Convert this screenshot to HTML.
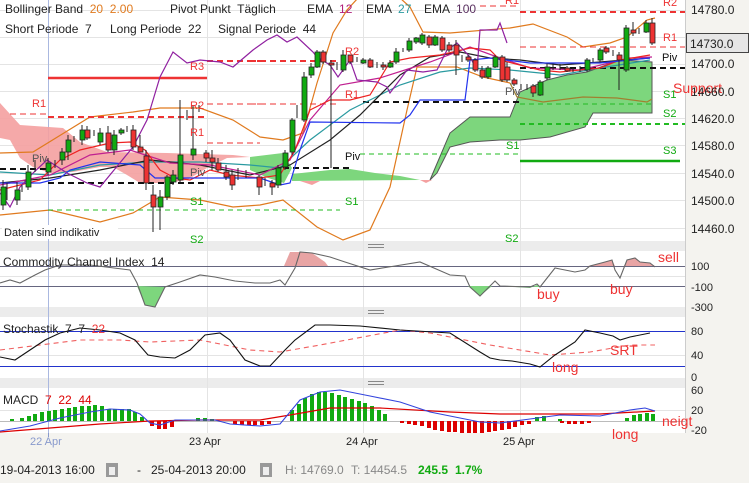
<!DOCTYPE html>
<html><head><meta charset="utf-8"><style>
html,body{margin:0;padding:0;background:#f4f3ef;}
svg{display:block;font-family:"Liberation Sans",Arial,sans-serif;}
text{white-space:pre;}
</style></head><body>
<svg width="749" height="483" viewBox="0 0 749 483" xmlns="http://www.w3.org/2000/svg" xml:space="preserve">
<rect width="749" height="483" fill="#f4f3ef"/>
<rect x="0" y="0" width="686" height="241" fill="#fff"/>
<rect x="0" y="241" width="686" height="10" fill="#ececec"/>
<rect x="0" y="251" width="686" height="56" fill="#fff"/>
<rect x="0" y="307" width="686" height="10" fill="#ececec"/>
<rect x="0" y="317" width="686" height="61" fill="#fff"/>
<rect x="0" y="378" width="686" height="10" fill="#ececec"/>
<rect x="0" y="388" width="686" height="45" fill="#fff"/>
<line x1="685.5" y1="0" x2="685.5" y2="433" stroke="#ccc"/>
<g stroke="#888" stroke-width="1">
<line x1="368" y1="244.5" x2="384" y2="244.5"/><line x1="368" y1="247.5" x2="384" y2="247.5"/>
<line x1="368" y1="310.5" x2="384" y2="310.5"/><line x1="368" y1="313.5" x2="384" y2="313.5"/>
<line x1="368" y1="381.5" x2="384" y2="381.5"/><line x1="368" y1="384.5" x2="384" y2="384.5"/>
</g>
<g stroke="#e4e4e4" stroke-width="1">
<line x1="0" y1="10.5" x2="685" y2="10.5"/><line x1="0" y1="37.5" x2="685" y2="37.5"/>
<line x1="0" y1="64.5" x2="685" y2="64.5"/><line x1="0" y1="91.5" x2="685" y2="91.5"/>
<line x1="0" y1="118.5" x2="685" y2="118.5"/><line x1="0" y1="145.5" x2="685" y2="145.5"/>
<line x1="0" y1="173.5" x2="685" y2="173.5"/><line x1="0" y1="200.5" x2="685" y2="200.5"/>
<line x1="0" y1="228.5" x2="685" y2="228.5"/>
<line x1="207.5" y1="0" x2="207.5" y2="433"/><line x1="363.5" y1="0" x2="363.5" y2="433"/>
<line x1="520.5" y1="0" x2="520.5" y2="433"/>
<line x1="0" y1="276.5" x2="685" y2="276.5"/><line x1="0" y1="355.5" x2="685" y2="355.5"/>
<line x1="0" y1="410.5" x2="685" y2="410.5"/>
</g>
<line x1="48.5" y1="0" x2="48.5" y2="433" stroke="#aab8e0"/>
<polygon fill="#f4a0a0" opacity="0.9" points="0,103 20,125 63,128 80,142 107,152 167,153 233,155 250,157 227,158 207,168 187,180 167,183 140,183 127,175 113,167 100,167 73,172 50,173 33,167 20,158 10,140 0,138"/>
<polygon fill="#7dd67d" points="250,157 283,153 292,168 284,183 268,178 250,170"/>
<polygon fill="#7dd67d" points="292,174 330,170 350,169 375,173 400,176 420,180 292,181"/>
<polygon fill="#f4a0a0" points="300,181 320,181 312,185"/><polygon fill="#f4a0a0" points="420,180 432,180 426,183"/>
<polygon fill="#7dd67d" stroke="#555" stroke-width="1" points="430,180 450,133 470,117 510,117 520,92 547,80 567,75 587,72 620,60 652,62 652,113 593,113 585,127 550,137 520,140 500,140 470,142 450,147 437,173"/>
<g fill="none" stroke="#e07a1e" stroke-width="1.2">
<polyline points="0,153 33,152 90,117 133,112 160,108 200,108 233,120 260,137 283,140 303,133 317,83 333,33 347,10 358,-2"/>
<polyline points="400,-2 410,7 423,32 450,33 510,28 533,24 567,37 583,47 610,43 627,37 647,20 655,18"/>
<polyline points="0,215 50,210 100,222 133,213 160,197 200,200 233,207 260,205 283,200 317,227 343,240 370,230 390,187 407,110 417,67 457,67 483,77 510,83"/>
</g>
<polyline fill="none" stroke="#a08030" stroke-width="1.2" points="510,83 517,97 543,102 583,97 617,98 647,102 652,99"/>
<g fill="none" stroke="#e33" >
<line x1="48" y1="78" x2="207" y2="78" stroke-width="2.5"/>
<line x1="207" y1="61" x2="260" y2="61" stroke-width="2" stroke-dasharray="6,4"/>
<line x1="250" y1="61" x2="340" y2="61" stroke-width="2" stroke-dasharray="6,4"/>
<line x1="207" y1="104" x2="260" y2="104" stroke-dasharray="6,4"/>
<line x1="10" y1="114" x2="48" y2="114" stroke-dasharray="6,4"/>
<line x1="48" y1="117" x2="207" y2="117" stroke-width="2" stroke-dasharray="6,4"/>
<line x1="207" y1="143" x2="260" y2="143" stroke-dasharray="6,4"/>
<line x1="250" y1="104" x2="340" y2="104" stroke-dasharray="6,4"/>
<line x1="520" y1="12" x2="685" y2="12" stroke-width="2" stroke-dasharray="6,4"/>
<line x1="520" y1="47" x2="685" y2="47" stroke-dasharray="6,4"/>
<line x1="480" y1="6" x2="520" y2="6" stroke-dasharray="6,4"/>
</g>
<g fill="none" stroke="#111" stroke-width="2" stroke-dasharray="6,4">
<line x1="0" y1="169" x2="48" y2="169"/><line x1="48" y1="183" x2="207" y2="183"/>
<line x1="283" y1="168" x2="350" y2="168"/><line x1="363" y1="102" x2="520" y2="102"/>
<line x1="520" y1="68" x2="685" y2="68"/>
</g>
<g fill="none" stroke="#2b2" stroke-dasharray="5,4">
<line x1="48" y1="210" x2="340" y2="210"/><line x1="360" y1="154" x2="520" y2="154"/>
<line x1="520" y1="104" x2="652" y2="104"/>
<line x1="520" y1="124" x2="685" y2="124" stroke-width="2"/>
</g>
<line x1="520" y1="161" x2="680" y2="161" stroke="#1a1" stroke-width="2.5"/>
<g fill="none" stroke-width="1.2">
<polyline stroke="#2a9aa0" points="0,172 50,175 100,165 150,162 200,162 250,165 280,168 310,140 350,110 400,85 440,72 470,68 510,70 560,75 600,68 650,60"/>
<polyline stroke="#222" points="0,183 50,178 100,170 150,160 200,165 250,175 290,165 330,140 360,115 400,75 430,57 460,52 490,58 520,60 560,65 600,62 650,58"/>
<polyline stroke="#c02090" points="0,185 50,175 90,155 130,150 170,163 210,165 260,175 290,160 310,120 340,85 380,78 430,62 470,47 500,58 530,68 580,70 630,58 652,57"/>
<polyline stroke="#ee2222" points="0,190 40,180 60,160 80,150 110,143 130,142 145,150 160,170 175,178 190,180 210,170 230,175 260,178 280,175 295,150 310,110 330,100 350,100 370,95 390,62 410,58 440,55 470,48 490,50 500,60 520,65 540,70 560,72 600,68 620,60 650,55"/>
<polyline stroke="#2233ee" points="0,183 40,183 60,178 70,170 100,162 140,165 155,178 260,178 280,185 290,183 300,150 310,122 400,123 410,115 420,100 465,100 470,60 490,58 530,63 600,63 650,58"/>
<polyline stroke="#9020a0" points="0,193 10,207 20,187 33,173 47,160 67,173 87,183 100,187 133,147 147,120 160,77 173,52 187,63 200,60 220,62 233,67 253,50 267,40 277,35 287,42 297,37 313,52 317,57 330,65 338,77 350,60 357,80 377,82 387,87 390,93 407,70 423,72 437,70 447,50 457,43 470,57 477,70 480,30 497,30 500,23 507,43"/>
</g>
<g stroke="#222" stroke-width="1">
<path d="M3 180V210M7 183V200M17 182V205M22 185V192M28 165V190M35 160V172M48 158V175M55 160V168M62 148V165M68 135V160M74 136V142M82 125V145M87 126V140M94 130V136M100 128V145M108 126V152M114 130V155M121 128V135M127 126V132M133 125V150M140 135V150M146 150V190M153 185V232M160 190V230M167 175V200M173 170V185M180 100V182M187 110V120M193 105V160M199 105V112M206 150V162M212 150V170M218 158V172M226 165V180M232 170V190M238 168V180M246 170V178M259 175V195M265 178V186M272 180V195M278 165V188M285 150V170M292 118V155M297 105V118M304 72V122M311 63V78M317 50V68M323 50V64M331 60V168M337 62V70M343 50V72M350 55V64M357 57V62M363 58V64M370 58V68M377 62V68M383 62V70M390 60V68M396 48V64M403 48V52M409 38V52M416 37V44M422 33V45M429 35V48M435 35V46M442 36V52M449 42V52M456 40V75M462 55V62M468 55V62M475 58V72M482 66V79M488 66V79M495 55V68M502 55V82M507 62V82M514 78V86M521 84V90M527 84V90M533 84V97M540 80V96M547 64V80M553 64V70M560 64V70M567 66V72M573 68V72M580 66V72M587 58V72M593 58V62M600 48V62M606 46V54M613 50V56M619 52V90M626 25V72M633 22V36M639 28V34M646 20V33M652 18V45"/>
</g>
<g stroke="#222" stroke-width="0.8">
<rect x="1" y="187" width="5" height="18" fill="#1a1"/><rect x="15" y="190" width="5" height="10" fill="#1a1"/><rect x="26" y="172" width="5" height="15" fill="#1a1"/><rect x="46" y="163" width="5" height="9" fill="#1a1"/><rect x="60" y="152" width="5" height="8" fill="#1a1"/><rect x="66" y="140" width="5" height="12" fill="#1a1"/><rect x="80" y="130" width="5" height="10" fill="#1a1"/><rect x="85" y="130" width="5" height="8" fill="#e33"/><rect x="98" y="133" width="5" height="9" fill="#1a1"/><rect x="106" y="133" width="5" height="17" fill="#e33"/><rect x="112" y="135" width="5" height="15" fill="#1a1"/><rect x="119" y="130" width="5" height="3" fill="#1a1"/><rect x="131" y="130" width="5" height="17" fill="#e33"/><rect x="138" y="147" width="5" height="5" fill="#e33"/><rect x="144" y="156" width="5" height="27" fill="#e33"/><rect x="151" y="195" width="5" height="12" fill="#e33"/><rect x="158" y="197" width="5" height="10" fill="#1a1"/><rect x="165" y="177" width="5" height="20" fill="#1a1"/><rect x="171" y="175" width="5" height="7" fill="#1a1"/><rect x="178" y="155" width="5" height="25" fill="#1a1"/><rect x="191" y="149" width="5" height="6" fill="#1a1"/><rect x="204" y="153" width="5" height="5" fill="#e33"/><rect x="210" y="158" width="5" height="4" fill="#e33"/><rect x="216" y="163" width="5" height="7" fill="#e33"/><rect x="224" y="172" width="5" height="5" fill="#e33"/><rect x="230" y="175" width="5" height="10" fill="#e33"/><rect x="257" y="177" width="5" height="10" fill="#e33"/><rect x="270" y="183" width="5" height="4" fill="#e33"/><rect x="276" y="168" width="5" height="17" fill="#1a1"/><rect x="283" y="153" width="5" height="14" fill="#1a1"/><rect x="290" y="120" width="5" height="32" fill="#1a1"/><rect x="302" y="77" width="5" height="43" fill="#1a1"/><rect x="309" y="67" width="5" height="8" fill="#1a1"/><rect x="315" y="52" width="5" height="15" fill="#1a1"/><rect x="321" y="52" width="5" height="10" fill="#e33"/><rect x="329" y="63" width="5" height="2" fill="#e33"/><rect x="341" y="55" width="5" height="15" fill="#1a1"/><rect x="348" y="55" width="5" height="7" fill="#e33"/><rect x="361" y="60" width="5" height="3" fill="#1a1"/><rect x="368" y="60" width="5" height="7" fill="#e33"/><rect x="381" y="65" width="5" height="2" fill="#e33"/><rect x="388" y="63" width="5" height="4" fill="#1a1"/><rect x="394" y="52" width="5" height="10" fill="#1a1"/><rect x="407" y="41" width="5" height="9" fill="#1a1"/><rect x="414" y="38" width="5" height="4" fill="#1a1"/><rect x="420" y="35" width="5" height="8" fill="#1a1"/><rect x="427" y="37" width="5" height="8" fill="#e33"/><rect x="433" y="37" width="5" height="8" fill="#1a1"/><rect x="440" y="38" width="5" height="12" fill="#e33"/><rect x="447" y="45" width="5" height="5" fill="#e33"/><rect x="454" y="45" width="5" height="10" fill="#e33"/><rect x="466" y="57" width="5" height="3" fill="#e33"/><rect x="473" y="60" width="5" height="10" fill="#e33"/><rect x="480" y="70" width="5" height="7" fill="#e33"/><rect x="486" y="68" width="5" height="9" fill="#1a1"/><rect x="493" y="57" width="5" height="10" fill="#1a1"/><rect x="500" y="57" width="5" height="23" fill="#e33"/><rect x="505" y="67" width="5" height="13" fill="#e33"/><rect x="512" y="80" width="5" height="4" fill="#e33"/><rect x="531" y="86" width="5" height="7" fill="#e33"/><rect x="538" y="82" width="5" height="13" fill="#1a1"/><rect x="545" y="67" width="5" height="11" fill="#1a1"/><rect x="565" y="68" width="5" height="3" fill="#e33"/><rect x="585" y="60" width="5" height="10" fill="#1a1"/><rect x="598" y="50" width="5" height="10" fill="#1a1"/><rect x="604" y="48" width="5" height="4" fill="#e33"/><rect x="617" y="55" width="5" height="5" fill="#e33"/><rect x="624" y="28" width="5" height="42" fill="#1a1"/><rect x="631" y="30" width="5" height="3" fill="#e33"/><rect x="644" y="23" width="5" height="9" fill="#1a1"/><rect x="650" y="23" width="5" height="20" fill="#e33"/>
</g>
<g font-size="12" fill="#222">
<text x="5" y="13">Bollinger Band  <tspan fill="#e07a1e">20</tspan>  <tspan fill="#e07a1e">2.00</tspan></text>
<text x="170" y="13">Pivot Punkt  Täglich</text>
<text x="307" y="13">EMA  <tspan fill="#b0207a">12</tspan></text>
<text x="366" y="13">EMA  <tspan fill="#2a9aa0">27</tspan></text>
<text x="424" y="13">EMA  <tspan fill="#5a3060">100</tspan></text>
<text x="5" y="33">Short Periode  7</text>
<text x="110" y="33">Long Periode  22</text>
<text x="218" y="33">Signal Periode  44</text>
</g>
<rect x="2" y="225" width="116" height="14" fill="#fff"/>
<text x="4" y="236" font-size="11" fill="#222">Daten sind indikativ</text>
<g font-size="11" fill="#e33">
<text x="190" y="70">R3</text><text x="190" y="109">R2</text><text x="190" y="136">R1</text>
<text x="32" y="107">R1</text><text x="345" y="55">R2</text><text x="345" y="98">R1</text>
<text x="663" y="6">R2</text><text x="663" y="41">R1</text><text x="505" y="4">R1</text>
</g>
<text x="673" y="93" font-size="14" fill="#e33">Support</text>
<g font-size="11" fill="#555"><text x="32" y="162">Piv</text><text x="190" y="176">Piv</text><text x="505" y="95">Piv</text></g>
<g font-size="11" fill="#111"><text x="345" y="160">Piv</text><text x="662" y="61">Piv</text></g>
<g font-size="11" fill="#1a1">
<text x="190" y="205">S1</text><text x="190" y="243">S2</text><text x="345" y="205">S1</text>
<text x="506" y="149">S1</text><text x="505" y="242">S2</text>
<text x="663" y="98">S1</text><text x="663" y="117">S2</text><text x="663" y="154">S3</text>
</g>
<g font-size="12" fill="#222">
<text x="691" y="14">14780.0</text><text x="691" y="68">14700.0</text><text x="691" y="96">14660.0</text>
<text x="691" y="123">14620.0</text><text x="691" y="150">14580.0</text><text x="691" y="178">14540.0</text>
<text x="691" y="205">14500.0</text><text x="691" y="233">14460.0</text>
</g>
<rect x="686.5" y="33.5" width="62" height="19" fill="#e6e6e6" stroke="#444"/>
<text x="690" y="48" font-size="12" fill="#222">14730.0</text>
<line x1="0" y1="266.5" x2="685" y2="266.5" stroke="#666680"/>
<line x1="0" y1="286.5" x2="685" y2="286.5" stroke="#666680"/>
<polygon fill="#7dd67d" points="137,286 145,305 155,307 165,287"/>
<polygon fill="#e8a4a4" points="284,266 290,252 300,252 312,253 325,262 328,266"/>
<polygon fill="#7dd67d" points="468,286 480,296 492,286"/><polygon fill="#7dd67d" points="500,286 530,288 537,285 540,287"/>
<polygon fill="#e8a4a4" points="588,266 605,262 612,260 615,266"/><polygon fill="#e8a4a4" points="624,266 627,260 635,258 640,262 650,263 655,266"/>
<polyline fill="none" stroke="#666" stroke-width="1.1" points="0,283 10,280 20,283 35,275 45,270 60,265 90,265 130,270 137,283 145,305 155,307 165,287 180,282 200,275 215,277 235,281 255,283 270,283 280,280 285,285 295,268 300,252 312,253 330,257 345,262 370,270 395,266 420,262 450,275 465,276 470,287 480,296 495,281 500,286 530,287 537,284 540,287 555,268 560,269 575,272 585,270 590,266 605,262 612,260 615,270 620,278 627,260 635,258 640,262 650,263 655,267"/>
<text x="3" y="266" font-size="12" fill="#222">Commodity Channel Index  14</text>
<g font-size="14" fill="#e33"><text x="537" y="299">buy</text><text x="610" y="294">buy</text><text x="658" y="262">sell</text></g>
<g font-size="11" fill="#222"><text x="691" y="270">100</text><text x="691" y="291">-100</text><text x="691" y="311">-300</text></g>
<line x1="0" y1="331.5" x2="685" y2="331.5" stroke="#2233cc"/>
<line x1="0" y1="366.5" x2="685" y2="366.5" stroke="#2233cc"/>
<polyline fill="none" stroke="#f06060" stroke-width="1.1" stroke-dasharray="5,4" points="0,350 40,345 80,340 120,340 150,342 200,340 250,350 280,352 320,345 400,330 430,333 490,345 550,355 590,352 630,345 655,345"/>
<polyline fill="none" stroke="#111" stroke-width="1.1" points="0,357 15,360 30,350 45,340 60,333 80,328 100,330 120,333 135,340 148,355 160,357 175,358 190,350 205,335 220,333 230,340 245,360 260,366 270,366 285,350 295,340 315,325 330,325 360,326 400,330 450,333 480,352 490,358 500,360 512,361 530,364 540,367 555,355 575,342 585,330 600,333 613,336 620,340 630,337 650,333"/>
<text x="3" y="333" font-size="12" fill="#222">Stochastik  7  7  <tspan fill="#e33">22</tspan></text>
<g font-size="14" fill="#e33"><text x="610" y="355">SRT</text><text x="552" y="372">long</text></g>
<g font-size="11" fill="#222"><text x="691" y="335">80</text><text x="691" y="359">40</text><text x="691" y="381">0</text></g>
<line x1="0" y1="421.5" x2="685" y2="421.5" stroke="#bbb"/>
<g fill="#1a1">
<rect x="10" y="419" width="4" height="2"/><rect x="20" y="418" width="4" height="3"/><rect x="27" y="416" width="4" height="5"/><rect x="33" y="414" width="4" height="7"/><rect x="40" y="412" width="4" height="9"/><rect x="47" y="411" width="4" height="10"/><rect x="53" y="410" width="4" height="11"/><rect x="60" y="409" width="4" height="12"/><rect x="67" y="408" width="4" height="13"/><rect x="73" y="407" width="4" height="14"/><rect x="80" y="406" width="4" height="15"/><rect x="87" y="406" width="4" height="15"/><rect x="93" y="405" width="4" height="16"/><rect x="100" y="406" width="4" height="15"/><rect x="107" y="409" width="4" height="12"/><rect x="113" y="409" width="4" height="12"/><rect x="120" y="409" width="4" height="12"/><rect x="127" y="409" width="4" height="12"/><rect x="133" y="412" width="4" height="9"/><rect x="140" y="417" width="4" height="4"/>
<rect x="196" y="418" width="4" height="3"/><rect x="203" y="418" width="4" height="3"/><rect x="210" y="419" width="4" height="2"/>
<rect x="290" y="410" width="4" height="11"/><rect x="297" y="404" width="4" height="17"/><rect x="303" y="398" width="4" height="23"/><rect x="310" y="394" width="4" height="27"/><rect x="317" y="392" width="4" height="29"/><rect x="323" y="392" width="4" height="29"/><rect x="330" y="393" width="4" height="28"/><rect x="337" y="395" width="4" height="26"/><rect x="343" y="397" width="4" height="24"/><rect x="350" y="399" width="4" height="22"/><rect x="357" y="401" width="4" height="20"/><rect x="363" y="403" width="4" height="18"/><rect x="370" y="406" width="4" height="15"/><rect x="377" y="410" width="4" height="11"/><rect x="383" y="414" width="4" height="7"/>
<rect x="535" y="417" width="4" height="4"/><rect x="542" y="416" width="4" height="5"/><rect x="558" y="419" width="4" height="2"/><rect x="625" y="418" width="4" height="3"/><rect x="632" y="415" width="4" height="6"/><rect x="638" y="414" width="4" height="7"/><rect x="645" y="413" width="4" height="8"/><rect x="651" y="414" width="4" height="7"/>
</g>
<g fill="#d00">
<rect x="150" y="421" width="4" height="5"/><rect x="157" y="421" width="4" height="8"/><rect x="163" y="421" width="4" height="8"/><rect x="170" y="421" width="4" height="6"/>
<rect x="233" y="421" width="4" height="3"/><rect x="240" y="421" width="4" height="4"/><rect x="247" y="421" width="4" height="4"/><rect x="253" y="421" width="4" height="4"/><rect x="260" y="421" width="4" height="4"/><rect x="267" y="421" width="4" height="3"/>
<rect x="400" y="421" width="4" height="2"/><rect x="407" y="421" width="4" height="3"/><rect x="413" y="421" width="4" height="4"/><rect x="420" y="421" width="4" height="5"/><rect x="427" y="421" width="4" height="7"/><rect x="433" y="421" width="4" height="9"/><rect x="440" y="421" width="4" height="10"/><rect x="447" y="421" width="4" height="11"/><rect x="453" y="421" width="4" height="11"/><rect x="460" y="421" width="4" height="12"/><rect x="467" y="421" width="4" height="12"/><rect x="473" y="421" width="4" height="12"/><rect x="480" y="421" width="4" height="12"/><rect x="487" y="421" width="4" height="11"/><rect x="493" y="421" width="4" height="10"/><rect x="500" y="421" width="4" height="9"/><rect x="507" y="421" width="4" height="8"/><rect x="513" y="421" width="4" height="6"/><rect x="520" y="421" width="4" height="4"/><rect x="527" y="421" width="4" height="3"/><rect x="560" y="421" width="4" height="2"/><rect x="567" y="421" width="4" height="3"/><rect x="573" y="421" width="4" height="3"/><rect x="580" y="421" width="4" height="3"/><rect x="587" y="421" width="4" height="2"/>
</g>
<polyline fill="none" stroke="#d00" stroke-width="1.2" points="0,432 50,428 100,424 150,421 200,420 260,420 290,415 330,408 380,408 450,412 500,414 550,414 600,414 655,411"/>
<polyline fill="none" stroke="#3344dd" stroke-width="1.1" points="0,431 30,426 60,418 90,412 110,409 130,410 140,414 150,423 160,425 175,420 200,420 215,420 230,424 260,426 280,424 290,412 300,400 320,392 340,390 370,396 400,402 430,412 460,418 480,422 500,423 530,419 560,415 600,416 630,410 645,408 655,411"/>
<text x="3" y="404" font-size="12" fill="#222">MACD  <tspan fill="#d00">7  22  44</tspan></text>
<g font-size="14" fill="#e33"><text x="662" y="426">neigt</text><text x="612" y="439">long</text></g>
<g font-size="11" fill="#222"><text x="691" y="394">60</text><text x="691" y="414">20</text><text x="691" y="434">-20</text></g>
<line x1="48.5" y1="433" x2="48.5" y2="437" stroke="#8899cc"/>
<g font-size="11"><text x="30" y="445" fill="#8899cc">22 Apr</text><text x="189" y="445" fill="#222">23 Apr</text><text x="346" y="445" fill="#222">24 Apr</text><text x="503" y="445" fill="#222">25 Apr</text></g>
<g font-size="12">
<text x="0" y="474" fill="#222">19-04-2013 16:00</text>
<rect x="106" y="463" width="12" height="14" fill="#999"/><rect x="109" y="467" width="6" height="8" fill="#eee"/>
<text x="137" y="474" fill="#222">-</text>
<text x="151" y="474" fill="#222">25-04-2013 20:00</text>
<rect x="260" y="463" width="12" height="14" fill="#999"/><rect x="263" y="467" width="6" height="8" fill="#eee"/>
<text x="285" y="474" fill="#888">H: 14769.0</text>
<text x="351" y="474" fill="#888">T: 14454.5</text>
<text x="418" y="474" fill="#1a1" font-weight="bold">245.5</text>
<text x="455" y="474" fill="#1a1" font-weight="bold">1.7%</text>
</g>
</svg>
</body></html>
